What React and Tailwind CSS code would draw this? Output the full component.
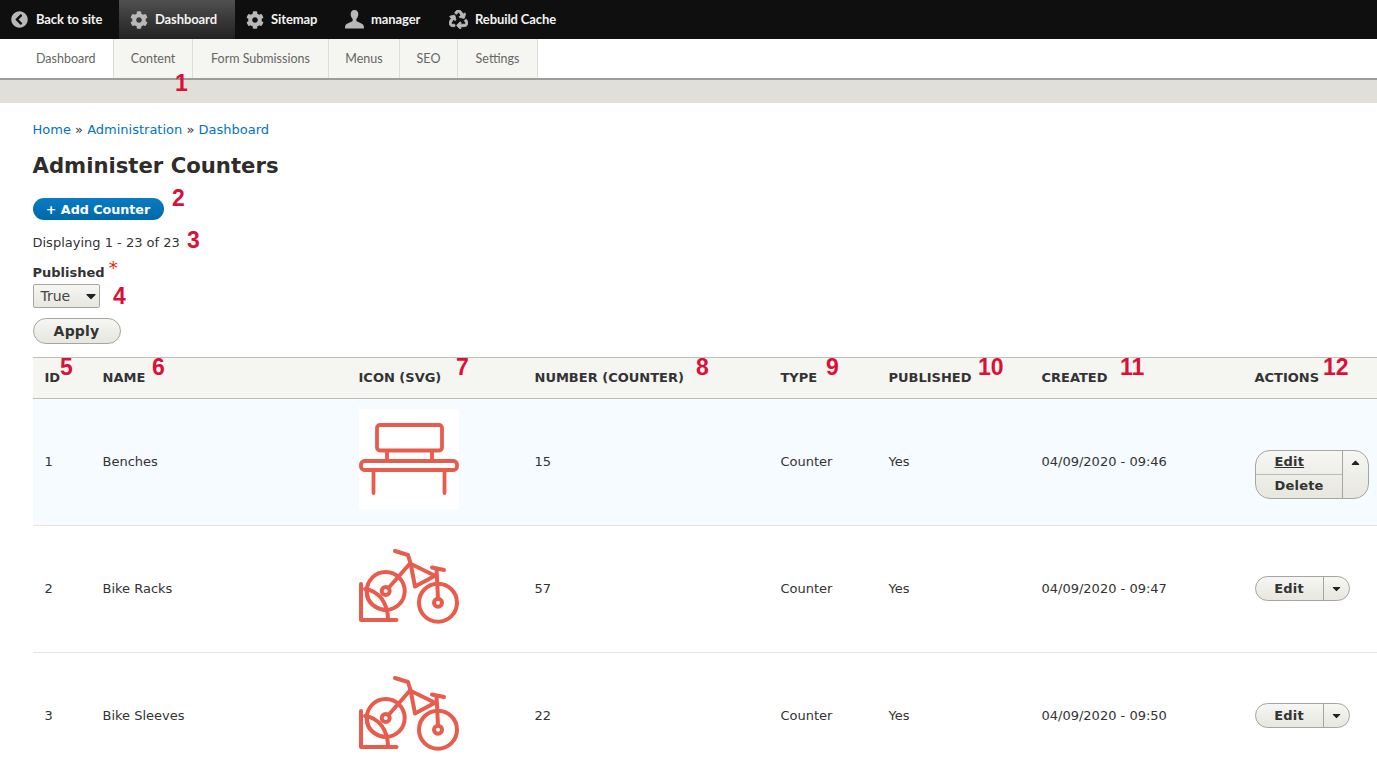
import React from "react";
import { FaChevronCircleLeft, FaCog, FaRecycle, FaCaretDown, FaCaretUp } from "react-icons/fa";

const topFont = "font-['Lato','Noto_Sans',sans-serif]";

function Person() {
  return (
    <svg viewBox="0 0 20 20" className="w-[19px] h-[19px] text-[#b8b8b8]" fill="currentColor">
      <path d="M10 0c-2.8 0-4 2-4 4.400 0 2 .8 3.700 2 4.800v2.300c-1.200 1.200-6 2-7.300 4.300C.2 16.600 0 18 0 19.500h20c0-1.500-.2-2.900-.7-3.700-1.300-2.300-6.100-3.100-7.300-4.300V9.200c1.200-1.100 2-2.800 2-4.800C14 2 12.800 0 10 0z" />
    </svg>
  );
}

function TopItem({ icon, label, active, className }) {
  return (
    <div
      className={`flex items-center h-full gap-[7px] ${active ? "bg-gradient-to-b from-[#505050] to-[#222222]" : ""} ${className}`}
    >
      <span className="w-[19px] flex justify-center text-[#b8b8b8]">{icon}</span>
      <span className="text-[13px] font-bold tracking-[-0.1px] text-[#f2f2f2]">{label}</span>
    </div>
  );
}

function Tab({ label, active, className }) {
  return (
    <div
      className={`h-full flex items-center pt-[1px] text-[12.5px] text-[#666663] border-r border-[#dcdcd8] ${active ? "bg-white justify-start pl-[36px]" : "bg-[#f5f5f2] justify-center"} ${className}`}
    >
      {label}
    </div>
  );
}

function Bench() {
  return (
    <svg viewBox="0 0 100 100" className="w-[100px] h-[100px] bg-white block" fill="none" stroke="#e85c4d" strokeWidth="3.800" strokeLinecap="round" strokeLinejoin="round">
      <rect x="18" y="16" width="65" height="25.500" rx="3" />
      <path d="M28 42v10M73 42v10" />
      <rect x="2" y="52" width="96" height="9" rx="3.500" />
      <path d="M14.500 62v22M85.500 62v22" />
    </svg>
  );
}

function Bike() {
  return (
    <svg viewBox="0 0 100 100" className="w-[100px] h-[100px] block" fill="none" stroke="#e85c4d" strokeWidth="4" strokeLinecap="round" strokeLinejoin="round">
      <circle cx="26.700" cy="55" r="19" />
      <circle cx="26.700" cy="55" r="4" />
      <circle cx="79" cy="66.700" r="19" />
      <circle cx="79" cy="66.700" r="4" />
      <path d="M2 48v36h35.500" />
      <path d="M6 53c14 2 23 14 23 31" />
      <path d="M8 57c0 9 7 15 18 17" />
      <path d="M29.500 52L51 27.500" />
      <path d="M36 15l13 4 2.500 8 4.500 23.500 20-10.800L51 27.500" />
      <path d="M73 31.500l12 2.500M77.500 32.500l1.500 30" />
    </svg>
  );
}

function EditButton({ open }) {
  if (open) {
    return (
      <div className="flex mt-[24px] w-[114px] h-[49px] rounded-[15px] border border-[#a6a6a0] overflow-hidden bg-gradient-to-b from-[#f6f6f3] to-[#e7e7df] font-bold text-[13px] text-[#333] tracking-[0.2px]">
        <div className="flex-1 flex flex-col">
          <div className="h-[24px] flex items-center pl-[19px] border-b border-[#bdbdb6]"><span className="underline">Edit</span></div>
          <div className="flex-1 flex items-center pl-[19px]">Delete</div>
        </div>
        <div className="w-[26px] border-l border-[#a6a6a0] flex justify-center pt-[5px]">
          <FaCaretUp className="w-[13px] h-[13px] text-[#222]" />
        </div>
      </div>
    );
  }
  return (
    <div className="flex mb-[2px] w-[95px] h-[25px] rounded-[13px] border border-[#a6a6a0] overflow-hidden bg-gradient-to-b from-[#f6f6f3] to-[#e7e7df] font-bold text-[13px] text-[#333] tracking-[0.2px]">
      <div className="flex-1 flex items-center justify-center pt-[1px]">Edit</div>
      <div className="w-[26px] border-l border-[#a6a6a0] flex items-center justify-center">
        <FaCaretDown className="w-[13px] h-[13px] text-[#222]" />
      </div>
    </div>
  );
}

const rows = [
  { id: 1, name: "Benches", icon: <Bench />, num: 15, created: "04/09/2020 - 09:46", open: true, bg: "bg-[#f5fbff]" },
  { id: 2, name: "Bike Racks", icon: <Bike />, num: 57, created: "04/09/2020 - 09:47", bg: "bg-white" },
  { id: 3, name: "Bike Sleeves", icon: <Bike />, num: 22, created: "04/09/2020 - 09:50", bg: "bg-white" },
];

const heads = ["ID", "NAME", "ICON (SVG)", "NUMBER (COUNTER)", "TYPE", "PUBLISHED", "CREATED", "ACTIONS"];
const numCls = "absolute font-['Liberation_Sans',sans-serif] font-bold text-[23px] leading-none text-[#dc0f37]";

export default function App() {
  return (
    <div className="relative h-[759px] w-[1377px] overflow-hidden bg-white font-['DejaVu_Sans',sans-serif] text-[13px] text-[#333333]">
      <div className={`h-[39px] bg-[#0f0f0f] flex items-center ${topFont}`}>
        <TopItem className="w-[119px] pl-[10px]" icon={<FaChevronCircleLeft className="w-[17px] h-[17px]" />} label="Back to site" />
        <TopItem active className="w-[116px] pl-[10px]" icon={<FaCog className="w-[18px] h-[18px]" />} label="Dashboard" />
        <TopItem className="w-[100px] pl-[10px]" icon={<FaCog className="w-[18px] h-[18px]" />} label="Sitemap" />
        <TopItem className="w-[104px] pl-[10px]" icon={<Person />} label="manager" />
        <TopItem className="w-[142px] pl-[10px]" icon={<FaRecycle className="w-[19px] h-[19px]" stroke="currentColor" strokeWidth={24} />} label="Rebuild Cache" />
      </div>
      <div className={`h-[39px] flex bg-white ${topFont}`}>
        <Tab active className="w-[114px]" label="Dashboard" />
        <Tab className="w-[79px]" label="Content" />
        <Tab className="w-[136px]" label="Form Submissions" />
        <Tab className="w-[71px]" label="Menus" />
        <Tab className="w-[58px]" label="SEO" />
        <Tab className="w-[80px]" label="Settings" />
      </div>
      <div className="h-[25px] bg-[#e0e0d9] border-t-2 border-[#9c9c98]" />

      <div className="pl-[32.5px]">
        <div className="mt-[18px] leading-[17px] text-[#0074bd]">
          Home <span className="text-[#333]">»</span> Administration <span className="text-[#333]">»</span> Dashboard
        </div>
        <h1 className="mt-[14px] text-[21.2px] leading-[28px] font-bold text-[#2f2c2a]">Administer Counters</h1>
        <div className="mt-[18px] w-[131px] h-[22px] pt-[1px] rounded-[11px] bg-gradient-to-b from-[#0a7cc4] to-[#0068a8] text-white text-[12.7px] font-bold flex items-center justify-center">
          + Add Counter
        </div>
        <div className="mt-[14px] leading-[17px]">Displaying 1 - 23 of 23</div>
        <div className="mt-[13px] leading-[17px] font-bold flex">
          Published<span className="ml-[4px] text-[#e32700] font-normal text-[18px] leading-[17px] -mt-[5px]">*</span>
        </div>
        <div className="mt-[3px] w-[67px] h-[24px] rounded-[2px] border border-[#a6a6a0] bg-gradient-to-b from-[#f6f6f3] to-[#e7e7df] flex items-center justify-between pl-[7px] pr-[0px] text-[14px] text-[#444]">
          True <FaCaretDown className="w-[16px] h-[16px] text-[#222]" />
        </div>
        <div className="mt-[10px] w-[88px] h-[26px] rounded-[13px] border border-[#a6a6a0] bg-gradient-to-b from-[#f6f6f3] to-[#e7e7df] font-bold text-[14px] tracking-[0.2px] flex items-center justify-center">
          Apply
        </div>
        <table className="mt-[13px] w-[1344px] table-fixed border-collapse">
          <colgroup>
            <col className="w-[58px]" />
            <col className="w-[256px]" />
            <col className="w-[176px]" />
            <col className="w-[246px]" />
            <col className="w-[108px]" />
            <col className="w-[153px]" />
            <col className="w-[213px]" />
            <col className="w-[134px]" />
          </colgroup>
          <thead>
            <tr className="h-[41px] bg-[#f5f5f2] border-y border-[#bfbfba]">
              {heads.map((h) => (
                <th key={h} className="pl-[12px] text-left font-bold text-[13px] text-[#333] whitespace-nowrap">
                  {h}
                </th>
              ))}
            </tr>
          </thead>
          <tbody>
            {rows.map((r) => (
              <tr key={r.id} className={`h-[127px] border-b border-[#e6e4df] ${r.bg}`}>
                <td className="pl-[12px]">{r.id}</td>
                <td className="pl-[12px]">{r.name}</td>
                <td className="pl-[12px] pb-[6px]">{r.icon}</td>
                <td className="pl-[12px]">{r.num}</td>
                <td className="pl-[12px]">Counter</td>
                <td className="pl-[12px]">Yes</td>
                <td className="pl-[12px] whitespace-nowrap">{r.created}</td>
                <td className="pl-[12px]"><EditButton open={r.open} /></td>
              </tr>
            ))}
          </tbody>
        </table>
      </div>

      <span className={`${numCls} left-[175px] top-[72px]`}>1</span>
      <span className={`${numCls} left-[172px] top-[187px]`}>2</span>
      <span className={`${numCls} left-[187px] top-[229px]`}>3</span>
      <span className={`${numCls} left-[113px] top-[285px]`}>4</span>
      <span className={`${numCls} left-[60px] top-[356px]`}>5</span>
      <span className={`${numCls} left-[152px] top-[356px]`}>6</span>
      <span className={`${numCls} left-[456px] top-[356px]`}>7</span>
      <span className={`${numCls} left-[696px] top-[356px]`}>8</span>
      <span className={`${numCls} left-[826px] top-[356px]`}>9</span>
      <span className={`${numCls} left-[978px] top-[356px]`}>10</span>
      <span className={`${numCls} left-[1120px] top-[356px]`}>11</span>
      <span className={`${numCls} left-[1323px] top-[356px]`}>12</span>
    </div>
  );
}
